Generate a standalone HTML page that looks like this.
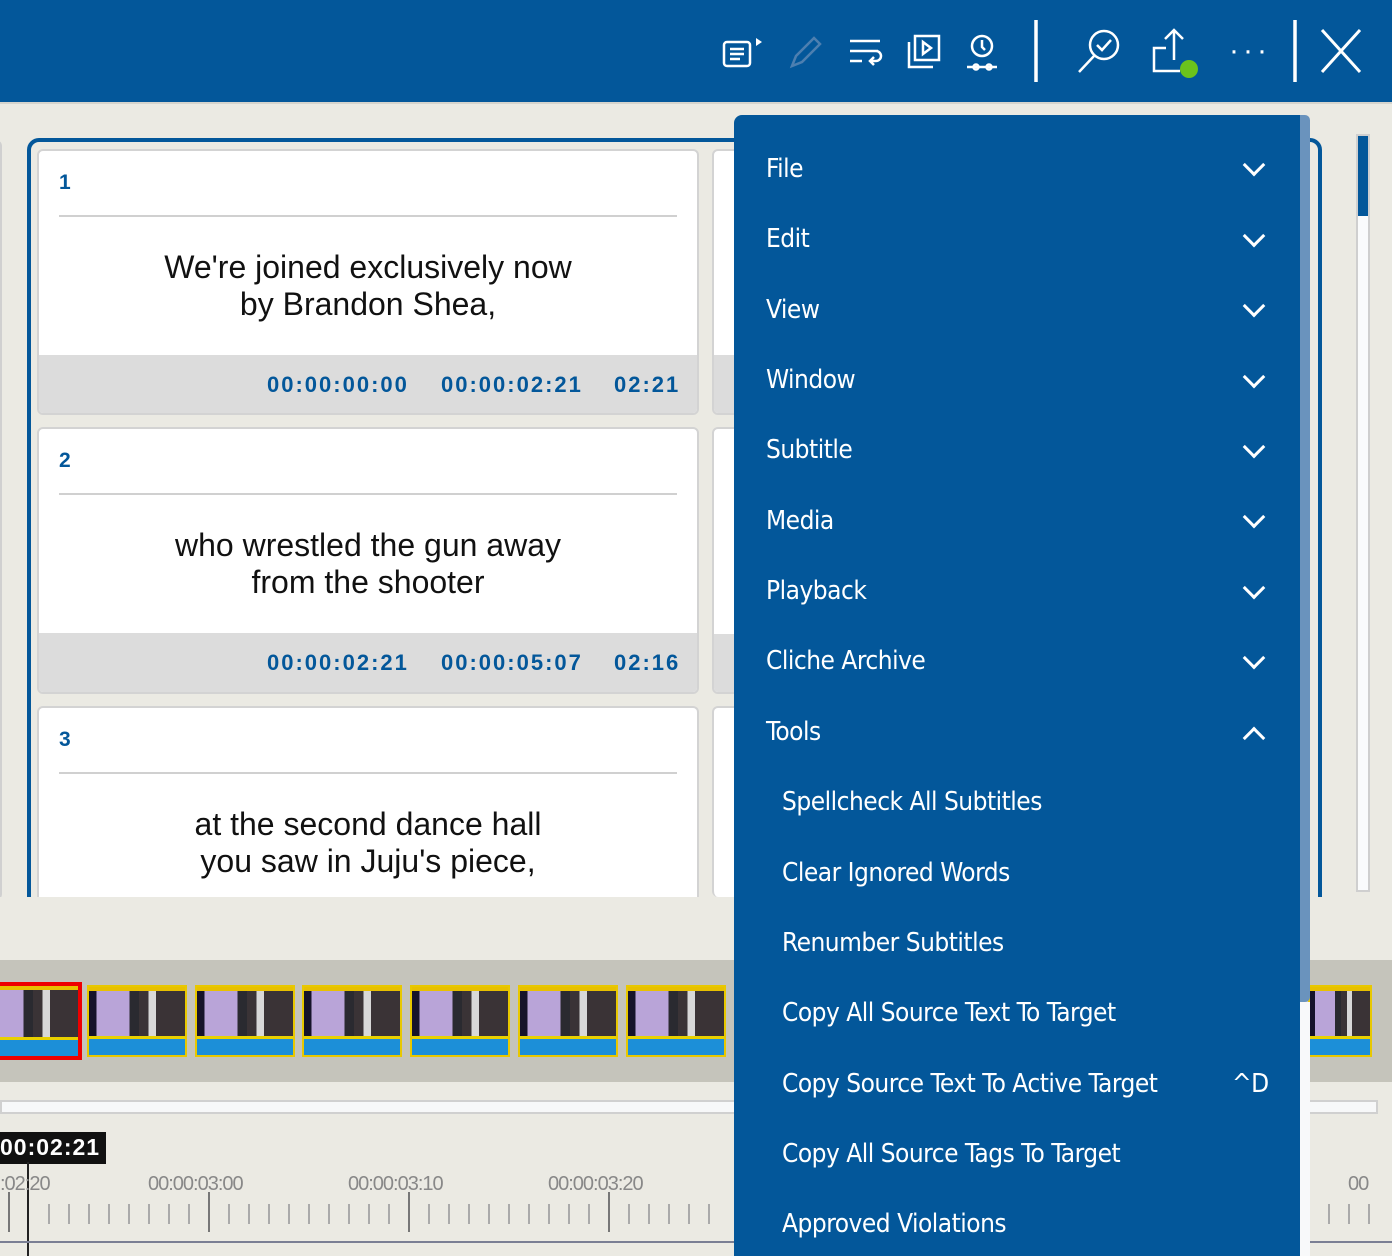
<!DOCTYPE html>
<html><head><meta charset="utf-8"><style>
*{margin:0;padding:0;box-sizing:border-box}
body{width:1392px;height:1256px;overflow:hidden;background:#ebeae3;position:relative;font-family:"Liberation Sans",sans-serif}
.hdr{position:absolute;left:0;top:0;width:1392px;height:104px;background:#03579a;border-bottom:2px solid #d5d4cd}
.abs{position:absolute}
.outer{position:absolute;left:27px;top:138px;width:1295px;height:800px;border:4px solid #03579a;border-radius:12px}
.card{position:absolute;background:#fff;border:2px solid #d3d3d3;border-radius:6px;overflow:hidden}
.num{position:absolute;left:20px;top:20px;color:#03579a;font-weight:bold;font-size:21px}
.hr{position:absolute;left:20px;right:20px;top:64px;height:2px;background:#d0d0d0}
.txt{position:absolute;left:0;right:0;top:98px;text-align:center;font-size:32px;line-height:37px;color:#111}
.ft{position:absolute;left:0;right:0;top:204px;height:62px;background:#dcdcdc;color:#03579a;font-size:22px;letter-spacing:2px;font-weight:bold}
.ft span{position:absolute;top:17px}
.menu{position:absolute;left:734px;top:115px;width:566px;height:1141px;background:#03579a;border-radius:8px 0 0 0;font-family:"Liberation Sans Narrow","DejaVu Sans Condensed","Liberation Sans",sans-serif;color:#fff;font-size:26px;letter-spacing:-0.5px}
.mi{position:absolute;left:32px}
.sub{left:48px}
.chev{position:absolute;left:512px;width:16px;height:16px;border-right:3px solid #fff;border-bottom:3px solid #fff;transform:rotate(45deg)}
.film{position:absolute;left:0;top:960px;width:1392px;height:122px;background:#c5c4bb}
.th{position:absolute;top:25px;width:100px;height:72px;background:linear-gradient(180deg,#e8c000 0 4px,transparent 4px),linear-gradient(90deg,#16132a 0 8%,#b9a4d8 8% 42%,#2a2a30 42% 52%,#3a3336 52% 62%,#d8d8d8 62% 70%,#3a3336 70%);border:2px solid #e8c800}
.th::after{content:"";position:absolute;left:0;right:0;bottom:0;height:16px;background:#1c8fd8;border-top:3px solid #e8d000}
.tl{position:absolute;top:1173px;font-size:20px;color:#888;letter-spacing:-1px}
</style></head><body>
<div class="hdr">
<svg class="abs" style="left:0;top:0" width="1392" height="104" fill="none" stroke="#fff" stroke-width="2.5">
<rect x="724" y="42" width="26" height="24" rx="3"/><path d="M730 49h14M730 54h14M730 59h10"/><path d="M756 38l6 4-6 4z" fill="#fff" stroke="none"/>
<path d="M792 66l4-10 18-18 6 6-18 18z" stroke="#4d7fb0"/>
<path d="M850 41h30M850 51h28M850 61h12M870 61h6a5 5 0 0 0 0-10M874 57l-4 4 4 4"/>
<rect x="915" y="36" width="24" height="24"/><path d="M909 42v25h24"/><path d="M923 42l8 6-8 6z"/>
<circle cx="982" cy="46" r="10"/><path d="M982 40v7l3 3M967 67h30"/><circle cx="976" cy="67" r="2.5"/><circle cx="989" cy="67" r="2.5"/>
<path d="M1036 20v62M1295 20v62" stroke-width="3.5"/>
<circle cx="1104" cy="45" r="14"/><path d="M1094 56l-15 16M1097 45l5 5 9-10"/>
<path d="M1174 30v30M1165 39l9-9 9 9M1166 48h-12v23h26"/>
<path d="M1322 30l38 42M1360 30l-38 42" stroke-width="3"/>
</svg>
<div class="abs" style="left:1180px;top:60px;width:18px;height:18px;border-radius:50%;background:#6bc31c"></div>
<div class="abs" style="left:1229px;top:34px;color:#fff;font-size:30px;letter-spacing:4px">···</div>
</div>
<div class="abs" style="left:-10px;top:140px;width:12px;height:760px;background:#fff;border:2px solid #d0d0d0;border-radius:6px"></div>
<div class="outer"></div>
<div class="abs" style="left:0;top:897px;width:1392px;height:63px;background:#ebeae3"></div>
<div class="card" style="left:37px;top:149px;width:662px;height:266px"><div class="num">1</div><div class="hr"></div><div class="txt">We're joined exclusively now<br>by Brandon Shea,</div><div class="ft"><span style="left:228px">00:00:00:00</span><span style="left:402px">00:00:02:21</span><span style="left:575px">02:21</span></div></div>
<div class="card" style="left:37px;top:427px;width:662px;height:267px"><div class="num">2</div><div class="hr"></div><div class="txt">who wrestled the gun away<br>from the shooter</div><div class="ft"><span style="left:228px">00:00:02:21</span><span style="left:402px">00:00:05:07</span><span style="left:575px">02:16</span></div></div>
<div class="card" style="left:37px;top:706px;width:662px;height:191px;border-bottom:none;border-radius:6px 6px 0 0"><div class="num">3</div><div class="hr"></div><div class="txt">at the second dance hall<br>you saw in Juju's piece,</div></div>
<div class="card" style="left:712px;top:149px;width:40px;height:266px"><div class="abs" style="left:0;top:204px;width:40px;height:62px;background:#dcdcdc"></div></div>
<div class="card" style="left:712px;top:427px;width:40px;height:267px"><div class="abs" style="left:0;top:205px;width:40px;height:62px;background:#dcdcdc"></div></div>
<div class="card" style="left:712px;top:706px;width:40px;height:191px;border-bottom:none"></div>
<div class="abs" style="left:1356px;top:134px;width:14px;height:758px;background:#fafbfc;border:2px solid #cfcfcf"><div style="height:80px;background:#03579a"></div></div>
<div class="film">
<div class="th" style="left:-20px;border:4px solid #e00;width:102px;height:78px;top:22px"></div>
<div class="th" style="left:87px"></div><div class="th" style="left:195px"></div><div class="th" style="left:302px"></div><div class="th" style="left:410px"></div><div class="th" style="left:518px"></div><div class="th" style="left:626px"></div><div class="th" style="left:1308px;width:64px"></div>
</div>
<div class="abs" style="left:0;top:1100px;width:1378px;height:14px;background:#f7f8f9;border:2px solid #d0d0d0"></div>
<div class="abs" style="left:0;top:1132px;width:106px;height:32px;background:#111;color:#fff;font-size:23px;font-weight:bold;letter-spacing:1px;padding:2px 0 0 0">00:02:21</div>
<div class="abs" style="left:27px;top:1162px;width:2px;height:94px;background:#222"></div>
<div class="tl" style="left:0">:02:20</div><div class="tl" style="left:148px">00:00:03:00</div><div class="tl" style="left:348px">00:00:03:10</div><div class="tl" style="left:548px">00:00:03:20</div><div class="tl" style="left:1348px">00</div>
<svg class="abs" style="left:0;top:1190px" width="1392" height="66" stroke="#aaa" stroke-width="2">
<path d="M9 2v40M209 2v40M409 2v40M609 2v40" stroke="#777"/>
<path d="M49 14v20M69 14v20M89 14v20M109 14v20M129 14v20M149 14v20M169 14v20M189 14v20M229 14v20M249 14v20M269 14v20M289 14v20M309 14v20M329 14v20M349 14v20M369 14v20M389 14v20M429 14v20M449 14v20M469 14v20M489 14v20M509 14v20M529 14v20M549 14v20M569 14v20M589 14v20M629 14v20M649 14v20M669 14v20M689 14v20M709 14v20M1329 14v20M1349 14v20M1369 14v20"/>
<path d="M0 52h1392" stroke="#7a7f94"/>
</svg>
<div class="abs" style="left:1300px;top:115px;width:10px;height:887px;background:#6a93bd;border-radius:0 5px 5px 0"></div>
<div class="abs" style="left:1300px;top:1002px;width:10px;height:254px;background:#f8f9fa"></div>
<div class="menu">
<div class="mi" style="top:39px">File</div><div class="chev" style="top:42px"></div>
<div class="mi" style="top:109px">Edit</div><div class="chev" style="top:113px"></div>
<div class="mi" style="top:180px">View</div><div class="chev" style="top:183px"></div>
<div class="mi" style="top:250px">Window</div><div class="chev" style="top:254px"></div>
<div class="mi" style="top:320px">Subtitle</div><div class="chev" style="top:324px"></div>
<div class="mi" style="top:391px">Media</div><div class="chev" style="top:394px"></div>
<div class="mi" style="top:461px">Playback</div><div class="chev" style="top:465px"></div>
<div class="mi" style="top:531px">Cliche Archive</div><div class="chev" style="top:535px"></div>
<div class="mi" style="top:602px">Tools</div><div class="chev" style="top:615px;transform:rotate(225deg)"></div>
<div class="mi sub" style="top:672px">Spellcheck All Subtitles</div>
<div class="mi sub" style="top:743px">Clear Ignored Words</div>
<div class="mi sub" style="top:813px">Renumber Subtitles</div>
<div class="mi sub" style="top:883px">Copy All Source Text To Target</div>
<div class="mi sub" style="top:954px">Copy Source Text To Active Target</div><div class="abs" style="left:498px;top:954px">^D</div>
<div class="mi sub" style="top:1024px">Copy All Source Tags To Target</div>
<div class="mi sub" style="top:1094px">Approved Violations</div>
</div>
</body></html>
